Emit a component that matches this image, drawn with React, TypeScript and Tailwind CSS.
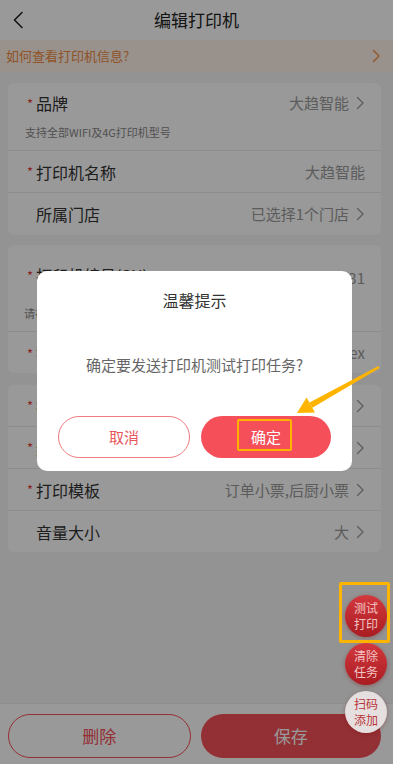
import React from "react";

const font = "font-['Noto_Sans_CJK_SC','Noto_Sans',sans-serif]";

function Chevron({ className = "" }: { className?: string }) {
  return (
    <svg className={className} width="9" height="14" viewBox="0 0 9 14" fill="none">
      <path d="M1.5 1.5L7 7l-5.5 5.5" stroke="currentColor" strokeWidth="1.3" strokeLinecap="round" strokeLinejoin="round" />
    </svg>
  );
}

type RowProps = {
  label: string;
  value?: string;
  required?: boolean;
  arrow?: boolean;
  sub?: string;
  last?: boolean;
};

function Row({ label, value, required, arrow, sub, last }: RowProps) {
  return (
    <div className={`px-4 ${last ? "" : "border-b border-[#ececec]"}`}>
      <div className={`flex items-center ${sub ? "h-[31px] pt-[9px]" : last ? "h-[42px]" : "h-[41px]"}`}>
        <span className="w-[12px] pl-[3px] text-[13px] leading-none text-[#e8403a]">{required ? "*" : ""}</span>
        <span className="text-[16px] leading-[22px] text-[#333]">{label}</span>
        <div className="ml-auto flex items-center gap-[7px] text-[15px] leading-[22px] text-[#999]">
          <span>{value}</span>
          {arrow ? <Chevron className="text-[#999]" /> : null}
        </div>
      </div>
      {sub ? <div className="pb-[10px] pt-[10px] pl-[1px] text-[11px] leading-[16px] text-[#888]">{sub}</div> : null}
    </div>
  );
}

export default function App() {
  return (
    <div className={`relative flex h-[764px] w-[393px] flex-col overflow-hidden bg-[#f5f5f5] ${font}`}>
      {/* Header */}
      <div className="relative flex h-[40px] items-center justify-center bg-white">
        <svg className="absolute left-[12px] top-[11px]" width="12" height="18" viewBox="0 0 12 18" fill="none">
          <path d="M10 1.5L2.5 9l7.5 7.5" stroke="#222" strokeWidth="1.6" strokeLinecap="round" strokeLinejoin="round" />
        </svg>
        <span className="text-[17px] leading-[24px] text-[#222]">编辑打印机</span>
      </div>

      {/* Tip bar */}
      <div className="flex h-[32px] items-center bg-[#fff4ea] pl-[6px] pr-[12px]">
        <span className="text-[13px] leading-[20px] text-[#f08a3e]">如何查看打印机信息?</span>
        <Chevron className="ml-auto text-[#f08a3e]" />
      </div>

      {/* Cards */}
      <div className="flex flex-1 flex-col pl-[8px] pr-[12px] pt-[11px]">
        <div className="h-[152px] overflow-hidden rounded-[6px] bg-white">
          <Row label="品牌" value="大趋智能" required arrow sub="支持全部WIFI及4G打印机型号" />
          <Row label="打印机名称" value="大趋智能" required />
          <Row label="所属门店" value="已选择1个门店" arrow last />
        </div>

        <div className="mt-[10px] h-[128px] overflow-hidden rounded-[6px] bg-white">
          <div className="h-[87px] border-b border-[#ececec] px-4 pt-[19px]">
            <div className="flex h-[22px] items-center">
              <span className="w-[12px] pl-[3px] text-[13px] leading-none text-[#e8403a]">*</span>
              <span className="text-[16px] leading-[22px] text-[#333]">打印机编号(SN)</span>
              <span className="ml-auto translate-y-[3px] text-[15px] leading-[22px] text-[#999]">960238531</span>
            </div>
            <div className="pt-[19px] text-[11px] leading-[16px] text-[#888]">请在打印机底部查看</div>
          </div>
          <Row label="打印机密钥(KEY)" value="9fa8ex" required last />
        </div>

        <div className="mt-[12px] h-[167px] overflow-hidden rounded-[6px] bg-white">
          <Row label="打印机类型" value="WIFI打印机" required arrow />
          <Row label="纸张宽度" value="58mm" required arrow />
          <Row label="打印模板" value="订单小票,后厨小票" required arrow />
          <Row label="音量大小" value="大" arrow last />
        </div>
      </div>

      {/* Bottom bar */}
      <div className="flex h-[61px] gap-[10px] border-t border-[#eeeeee] bg-white pl-[8px] pr-[12px] pt-[10px]">
        <button className="flex h-[44px] flex-1 items-center justify-center rounded-full border border-[#f5505a] text-[17px] text-[#f5505a]">
          删除
        </button>
        <button className="flex h-[44px] flex-1 items-center justify-center rounded-full bg-[#f5505a] text-[17px] text-white">
          保存
        </button>
      </div>

      {/* Mask */}
      <div className="absolute inset-0 bg-black/40" />

      {/* Dialog */}
      <div className="absolute left-[37px] top-[271px] flex h-[200px] w-[315px] flex-col items-center rounded-[10px] bg-white">
        <div className="pt-[17px] text-[16px] leading-[24px] text-[#333]">温馨提示</div>
        <div className="pt-[41px] text-[15px] leading-[24px] text-[#666]">确定要发送打印机测试打印任务?</div>
        <div className="mt-auto flex w-full gap-[11px] px-[21px] pb-[13px]">
          <button className="flex h-[42px] flex-1 items-center justify-center rounded-full border border-[#ec7d80] text-[15px] text-[#e8555b]">
            取消
          </button>
          <button className="flex h-[42px] flex-1 items-center justify-center rounded-full bg-[#f5505a] text-[15px] text-white">
            确定
          </button>
        </div>
      </div>

      {/* Highlight around confirm */}
      <div className="pointer-events-none absolute left-[237px] top-[419px] h-[32px] w-[55px] rounded-[2px] border-2 border-[#ffb400]" />

      {/* Floating buttons */}
      <div className="absolute left-[345px] top-[595px] flex flex-col gap-[6px]">
        <div className="flex h-[42px] w-[42px] flex-col items-center justify-center rounded-full bg-gradient-to-b from-[#d3383d] to-[#a91c22] text-[12px] leading-[16px] text-[#f3c4c4] shadow-[0_1px_4px_rgba(120,0,0,0.35)]">
          <span>测试</span>
          <span>打印</span>
        </div>
        <div className="flex h-[42px] w-[42px] flex-col items-center justify-center rounded-full bg-gradient-to-b from-[#d3383d] to-[#a91c22] text-[12px] leading-[16px] text-[#f3c4c4] shadow-[0_1px_4px_rgba(120,0,0,0.35)]">
          <span>清除</span>
          <span>任务</span>
        </div>
        <div className="flex h-[42px] w-[42px] flex-col items-center justify-center rounded-full bg-[#e6dfdf] text-[12px] leading-[16px] text-[#b8353a] shadow-[0_1px_4px_rgba(120,0,0,0.3)]">
          <span>扫码</span>
          <span>添加</span>
        </div>
      </div>

      {/* Highlight around test print */}
      <div className="pointer-events-none absolute left-[339px] top-[582px] h-[61px] w-[51px] rounded-[2px] border-[3px] border-[#ffb400]" />

      {/* Arrow */}
      <svg className="pointer-events-none absolute inset-0" width="393" height="764" viewBox="0 0 393 764">
        <polygon points="379.6,368 378.4,366 309.5,402.6 312.4,407.8" fill="#ffb400" />
        <polygon points="297,413 315,412.4 306.6,397.6" fill="#ffb400" />
      </svg>
    </div>
  );
}
